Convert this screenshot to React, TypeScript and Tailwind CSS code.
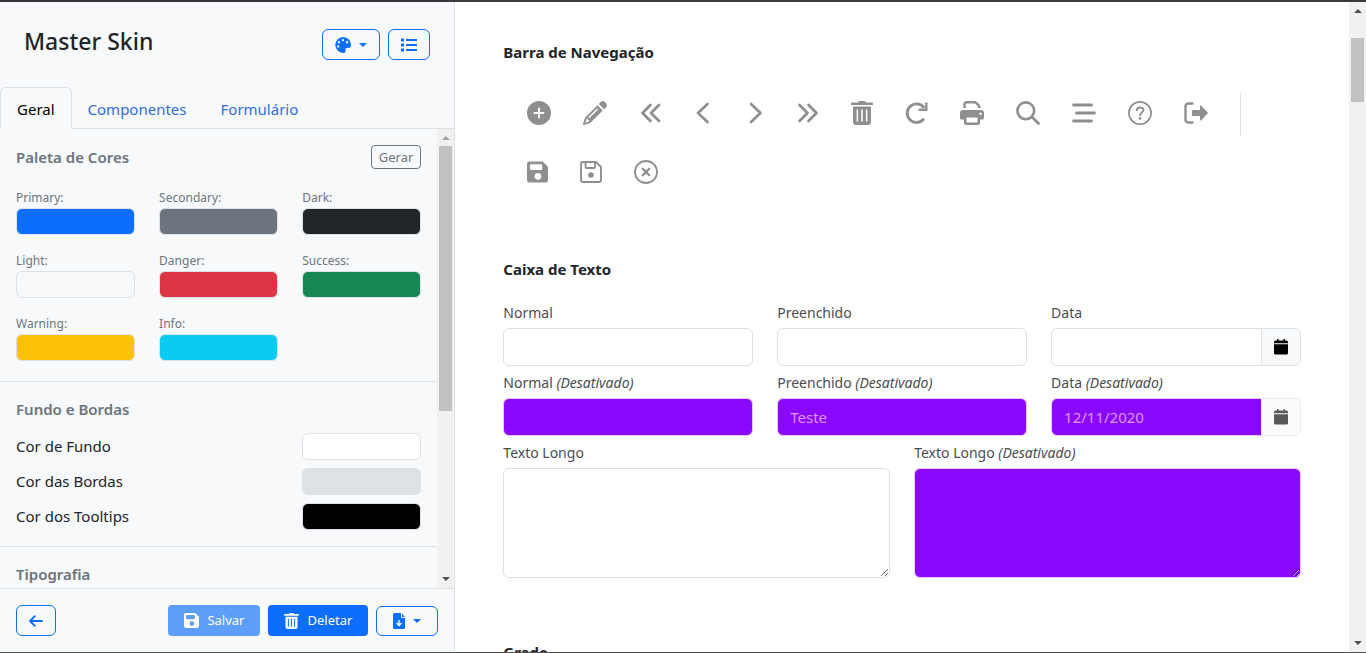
import React from "react";

const GERAL_COLORS = [
  { name: "Primary", swatch: "bg-[#0d6efd]" },
  { name: "Secondary", swatch: "bg-[#6c757d]" },
  { name: "Dark", swatch: "bg-[#212529]" },
  { name: "Light", swatch: "bg-[#f8f9fa]" },
  { name: "Danger", swatch: "bg-[#dc3545]" },
  { name: "Success", swatch: "bg-[#198754]" },
  { name: "Warning", swatch: "bg-[#ffc107]" },
  { name: "Info", swatch: "bg-[#0dcaf0]" },
];

const SURFACE_COLORS = [
  { name: "Cor de Fundo", swatch: "bg-white" },
  { name: "Cor das Bordas", swatch: "bg-[#dee2e6]" },
  { name: "Cor dos Tooltips", swatch: "bg-black" },
];

const line = {
  fill: "none",
  stroke: "currentColor",
  strokeLinecap: "round" as const,
  strokeLinejoin: "round" as const,
};

const trashPath =
  "M9 0h6l1 1.6h6.2a1 1 0 0 1 0 2.4H1.8a1 1 0 0 1 0-2.4H8zM3 5.6h18V21a3 3 0 0 1-3 3H6a3 3 0 0 1-3-3zM6.6 8.6v12h1.5v-12zM11.2 8.6v12h1.6v-12zM15.9 8.6v12h1.5v-12z";
const savePath =
  "M3 1h14.500L23 6.500V20a3 3 0 0 1-3 3H4a3 3 0 0 1-3-3V3.500A2.500 2.500 0 0 1 3 1zM5.500 4A1.500 1.500 0 0 0 4 5.500v3A1.500 1.500 0 0 0 5.500 10h10A1.500 1.500 0 0 0 17 8.500v-3A1.500 1.500 0 0 0 15.500 4zM12.500 13a3.500 3.500 0 1 0 0 7 3.500 3.500 0 0 0 0-7z";

const NAV_MAIN: { label: string; size: string; box: string; art: React.ReactNode }[] = [
  {
    label: "Adicionar",
    size: "w-6",
    box: "0 0 24 24",
    art: (
      <>
        <circle cx="12" cy="12" r="12" fill="currentColor" />
        <path d="M12 7.500v9M7.500 12h9" stroke="#fff" strokeWidth="2" strokeLinecap="round" />
      </>
    ),
  },
  {
    label: "Editar",
    size: "w-6",
    box: "0 0 24 24",
    art: (
      <>
        <path d="M17.500 1.200a3.200 3.200 0 0 1 4.500 0l.8.8a3.200 3.200 0 0 1 0 4.500l-1.800 1.700L15.800 3z" fill="currentColor" />
        <path
          fillRule="evenodd"
          d="M14.400 4.300l5.300 5.300L7.300 22 1 23.900a.8.8 0 0 1-1-1L2 16.700zM3.700 17.800l-1.300 3.900 3.900-1.300c0-1-.3-1.500-1.300-1.600 0-.6-.6-1-1.300-1zM14 7.400L5.200 16.200l1 1 8.900-8.800z"
          fill="currentColor"
        />
      </>
    ),
  },
  {
    label: "Primeiro",
    size: "w-[22px]",
    box: "0 0 22 24",
    art: <path {...line} strokeWidth="2.700" d="M11.500 4L3.500 12l8 8M20 4l-8 8 8 8" />,
  },
  {
    label: "Anterior",
    size: "w-5",
    box: "0 0 20 24",
    art: <path {...line} strokeWidth="2.700" d="M14.500 3L5 12l9.500 9" />,
  },
  {
    label: "Próximo",
    size: "w-5",
    box: "0 0 20 24",
    art: <path {...line} strokeWidth="2.700" d="M6 3l9.500 9L6 21" />,
  },
  {
    label: "Último",
    size: "w-[22px]",
    box: "0 0 22 24",
    art: <path {...line} strokeWidth="2.700" d="M2.500 4l8 8-8 8M11.500 4l8 8-8 8" />,
  },
  {
    label: "Excluir",
    size: "w-[22px]",
    box: "1 0 22 24",
    art: <path fill="currentColor" fillRule="evenodd" d={trashPath} />,
  },
  {
    label: "Atualizar",
    size: "w-[23px]",
    box: "0 0 23 24",
    art: (
      <>
        <path {...line} strokeWidth="2.800" d="M18.300 18.500A9.300 9.300 0 1 1 18.500 6" />
        <path {...line} strokeWidth="2.400" strokeLinecap="butt" strokeLinejoin="miter" d="M21.300 1.500v7.300h-7.600" />
      </>
    ),
  },
  {
    label: "Imprimir",
    size: "w-6",
    box: "0 0 24 24",
    art: (
      <>
        <path {...line} strokeWidth="2.400" strokeLinecap="butt" d="M4.500 7V3.200a2 2 0 0 1 2-2h8.700l4 3.600V7" />
        <path
          fill="currentColor"
          fillRule="evenodd"
          d="M3 9h18a3 3 0 0 1 3 3v5a1.500 1.500 0 0 1-1.500 1.500H20V22a2 2 0 0 1-2 2H6a2 2 0 0 1-2-2v-3.500H1.500A1.500 1.500 0 0 1 0 17v-5a3 3 0 0 1 3-3zM6.500 16.500v5h11v-5zM20.500 11.500a1.300 1.300 0 1 0 0 2.600 1.300 1.300 0 0 0 0-2.600z"
        />
      </>
    ),
  },
  {
    label: "Pesquisar",
    size: "w-6",
    box: "0 0 24 24",
    art: (
      <>
        <circle {...line} cx="9.800" cy="9.800" r="8.400" strokeWidth="2.600" />
        <path {...line} strokeWidth="2.800" d="M16 16l6.500 6.500" />
      </>
    ),
  },
  {
    label: "Menu",
    size: "w-6",
    box: "0 0 24 24",
    art: <path {...line} strokeWidth="2.800" d="M1.500 4h18M4.500 12h18M1.500 20h18" />,
  },
  {
    label: "Ajuda",
    size: "w-6",
    box: "0 0 24 24",
    art: (
      <>
        <circle {...line} cx="12" cy="12" r="11.100" strokeWidth="1.700" />
        <path {...line} strokeWidth="1.900" d="M8.800 9.200c.2-3.700 6.700-3.700 6.600 0 0 2.300-3.200 2.300-3.300 5" />
        <circle cx="12" cy="17.400" r="1.300" fill="currentColor" />
      </>
    ),
  },
  {
    label: "Sair",
    size: "w-6",
    box: "0 0 24 24",
    art: (
      <>
        <path {...line} strokeWidth="2.400" d="M8.500 2.500H4A2.500 2.500 0 0 0 1.500 5v14A2.500 2.500 0 0 0 4 21.500h4.500" />
        <path fill="currentColor" d="M9 9h7V5.200a.7.700 0 0 1 1.100-.6l6.500 6.800a.9.900 0 0 1 0 1.200l-6.500 6.800a.7.700 0 0 1-1.100-.6V15H9a1 1 0 0 1-1-1v-4a1 1 0 0 1 1-1z" />
      </>
    ),
  },
];

const NAV_EXTRA: typeof NAV_MAIN = [
  {
    label: "Salvar",
    size: "w-[21px]",
    box: "1 0 22 24",
    art: <path fill="currentColor" fillRule="evenodd" d={savePath} />,
  },
  {
    label: "Salvar rascunho",
    size: "w-[22px]",
    box: "0 0 22 24",
    art: (
      <>
        <path {...line} strokeWidth="1.900" d="M3 2h13l5 5v13a2 2 0 0 1-2 2H3a2 2 0 0 1-2-2V4a2 2 0 0 1 2-2z" />
        <path {...line} strokeWidth="1.800" d="M5.500 2.500V7a1 1 0 0 0 1 1H14a1 1 0 0 0 1-1V2.500" />
        <circle cx="11" cy="15" r="2.800" fill="currentColor" />
      </>
    ),
  },
  {
    label: "Cancelar",
    size: "w-6",
    box: "0 0 24 24",
    art: (
      <>
        <circle {...line} cx="12" cy="12" r="11" strokeWidth="1.800" />
        <path {...line} strokeWidth="2.200" d="M8.700 8.700l6.600 6.600M15.300 8.700l-6.600 6.600" />
      </>
    ),
  },
];

function NavGroup({ items, divider }: { items: typeof NAV_MAIN; divider?: boolean }) {
  return (
    <div className={divider ? "flex h-[43px] border-r border-[#dee2e6] pr-4" : "flex h-[43px]"}>
      {items.map((item) => (
        <button key={item.label} type="button" aria-label={item.label} className="flex items-center px-4 pb-1 text-[#8f8f8f]">
          <svg viewBox={item.box} className={`h-6 ${item.size}`}>
            {item.art}
          </svg>
        </button>
      ))}
    </div>
  );
}

function Caret() {
  return (
    <svg viewBox="0 0 8 4" className="h-1 w-2" fill="currentColor">
      <path d="M0 0h8L4 4z" />
    </svg>
  );
}

function ScrollTrack({ thumb, upClass }: { thumb: string; upClass: string }) {
  return (
    <div aria-hidden="true" className="flex w-[17px] shrink-0 flex-col items-center bg-[#f1f1f1] py-[7px]">
      <svg viewBox="0 0 8 4" className={`h-1 w-2 shrink-0 ${upClass}`} fill="currentColor">
        <path d="M4 0l4 4H0z" />
      </svg>
      <div className={`w-[13px] bg-[#c1c1c1] ${thumb}`} />
      <svg viewBox="0 0 8 4" className="mt-auto h-1 w-2 shrink-0 text-[#505050]" fill="currentColor">
        <path d="M0 0h8L4 4z" />
      </svg>
    </div>
  );
}

function CalendarIcon() {
  return (
    <svg viewBox="0 0 14 16" className="h-4 w-[14px]" fill="currentColor">
      <path d="M3 0h1.500v1.500h5V0H11v1.500h1.500A1.500 1.500 0 0 1 14 3v1.200H0V3a1.500 1.500 0 0 1 1.500-1.500H3zM0 5.200h14V14a1.500 1.500 0 0 1-1.500 1.500h-11A1.500 1.500 0 0 1 0 14z" />
    </svg>
  );
}

const outlineButton =
  "flex items-center justify-center rounded-md border border-[#0d6efd] text-[#0d6efd]";
const fieldLabel = "mb-[3px] block text-sm leading-6 text-[#4a4d50]";
const field =
  "block h-[38px] w-full min-w-0 border border-[#dee2e6] bg-white px-3 text-[15px] text-[#212529] disabled:border-[#e9c8ff] disabled:bg-[#8b08ff] disabled:text-[#dc94ff]";
const area =
  "block h-[110px] w-full resize-y rounded-md border border-[#dee2e6] bg-white px-3 py-2 disabled:border-[#e9c8ff] disabled:bg-[#8b08ff]";

function Off() {
  return <em>(Desativado)</em>;
}

function TextField({ id, label, off, value }: { id: string; label: string; off?: boolean; value?: string }) {
  return (
    <div>
      <label htmlFor={id} className={fieldLabel}>
        {label} {off && <Off />}
      </label>
      <input id={id} type="text" disabled={off} defaultValue={value} className={`${field} rounded-md`} />
    </div>
  );
}

function DateField({ id, label, off, value }: { id: string; label: string; off?: boolean; value?: string }) {
  return (
    <div>
      <label htmlFor={id} className={fieldLabel}>
        {label} {off && <Off />}
      </label>
      <div className="flex">
        <input id={id} type="text" disabled={off} defaultValue={value} className={`${field} rounded-l-md border-r-0`} />
        <button
          type="button"
          disabled={off}
          aria-label="Abrir calendário"
          className="flex w-10 shrink-0 items-center justify-center rounded-r-md border border-[#dee2e6] bg-[#f8f9fa] text-black disabled:opacity-65"
        >
          <CalendarIcon />
        </button>
      </div>
    </div>
  );
}

function Sidebar() {
  return (
    <aside className="flex w-1/3 shrink-0 flex-col border-r border-[#dee2e6] bg-[#f8f9fa]">
      <header className="flex items-start justify-between px-6 pt-[27px]">
        <h1 className="text-[23px] leading-6 font-medium">Master Skin</h1>
        <div className="flex gap-2">
          <button type="button" aria-label="Paleta" className={`${outlineButton} h-[31px] w-[58px] gap-2`}>
            <svg viewBox="0 0 16 16" className="size-4" fill="currentColor">
              <path
                fillRule="evenodd"
                d="M8 0a8 8 0 1 0 .6 16c1.600-.1 2.200-1 1.900-2.300-.4-1.700.4-2.900 2-2.900H14c1.300 0 2-.9 2-2.600C16 3.600 12.400 0 8 0zM8 1.900a1.200 1.200 0 1 1 0 2.400 1.200 1.200 0 0 1 0-2.400zM3.900 4a1.200 1.200 0 1 1 0 2.400 1.200 1.200 0 0 1 0-2.400zM12.100 4a1.200 1.200 0 1 1 0 2.400 1.200 1.200 0 0 1 0-2.400zM3.200 8.200a1.200 1.200 0 1 1 0 2.400 1.200 1.200 0 0 1 0-2.400z"
              />
            </svg>
            <Caret />
          </button>
          <button type="button" aria-label="Lista" className={`${outlineButton} h-[31px] w-[42px]`}>
            <svg viewBox="0 0 16 14" className="h-[14px] w-4" fill="currentColor">
              <path d="M0 .5h3v3H0zM5 1h11v2H5zM0 5.500h3v3H0zM5 6h11v2H5zM0 10.500h3v3H0zM5 11h11v2H5z" />
            </svg>
          </button>
        </div>
      </header>

      <nav className="mt-[27px] flex border-b border-[#dee2e6]">
        <a
          href="#geral"
          className="-mb-px rounded-t-md border border-b-0 border-[#dee2e6] bg-[#f8f9fa] px-4 pt-[9px] pb-2 leading-6 text-black"
        >
          Geral
        </a>
        <a href="#componentes" className="px-4 pt-[10px] leading-6 text-[#2f6ee0]">
          Componentes
        </a>
        <a href="#formulario" className="px-4 pt-[10px] pl-[18px] leading-6 text-[#2f6ee0]">
          Formulário
        </a>
      </nav>

      <div className="flex min-h-0 flex-1">
        <div className="min-w-0 flex-1 overflow-hidden">
          <section className="border-b border-[#dee2e6] px-4 pt-4 pb-5">
            <div className="flex h-6 items-center justify-between">
              <h2 className="leading-[22px] font-semibold text-[#6c757d]">Paleta de Cores</h2>
              <button
                type="button"
                className="rounded border border-[#6c757d] px-[7px] text-[13px] leading-[22px] text-[#6c757d]"
              >
                Gerar
              </button>
            </div>
            <div className="mt-[19px] grid grid-cols-3 gap-x-6 gap-y-4">
              {GERAL_COLORS.map((color) => (
                <div key={color.name}>
                  <div className="text-xs leading-5 text-[#6c757d]">{color.name}:</div>
                  <button
                    type="button"
                    aria-label={color.name}
                    className={`block h-[27px] w-full rounded-md border border-[#dee2e6] ${color.swatch}`}
                  />
                </div>
              ))}
            </div>
          </section>

          <section className="border-b border-[#dee2e6] p-4">
            <h2 className="leading-[22px] font-semibold text-[#6c757d]">Fundo e Bordas</h2>
            <div className="mt-[13px] flex flex-col gap-2">
              {SURFACE_COLORS.map((color) => (
                <div key={color.name} className="grid grid-cols-3 items-center gap-x-6">
                  <span className="col-span-2 leading-[27px]">{color.name}</span>
                  <button
                    type="button"
                    aria-label={color.name}
                    className={`block h-[27px] w-full rounded-md border border-[#dee2e6] ${color.swatch}`}
                  />
                </div>
              ))}
            </div>
          </section>

          <section className="p-4">
            <h2 className="leading-[22px] font-semibold text-[#6c757d]">Tipografia</h2>
          </section>
        </div>
        <ScrollTrack thumb="mt-[6px] h-[265px]" upClass="text-[#a3a3a3]" />
      </div>

      <footer className="flex items-end gap-2 border-t border-[#dee2e6] p-4">
        <button type="button" aria-label="Voltar" className={`${outlineButton} mr-auto h-[31px] w-10`}>
          <svg viewBox="0 0 14 12" className="h-3 w-[14px]">
            <path {...line} strokeWidth="1.900" d="M13 6H1.200M5.800 1.200L1 6l4.800 4.800" />
          </svg>
        </button>
        <button
          type="button"
          disabled
          className="flex h-[31px] items-center gap-2 rounded bg-[#0d6efd] px-4 text-[13px] text-white disabled:opacity-65"
        >
          <svg viewBox="1 1 22 22" className="size-[15px]" fill="currentColor">
            <path fillRule="evenodd" d={savePath} />
          </svg>
          Salvar
        </button>
        <button type="button" className="flex h-[31px] items-center gap-2 rounded bg-[#0d6efd] px-4 text-[13px] text-white">
          <svg viewBox="1 0 22 24" className="h-4 w-[15px]" fill="currentColor">
            <path fillRule="evenodd" d={trashPath} />
          </svg>
          Deletar
        </button>
        <button type="button" aria-label="Exportar" className={`${outlineButton} h-[30px] w-[62px] gap-2`}>
          <svg viewBox="0 0 12 16" className="h-4 w-3" fill="currentColor">
            <path
              fillRule="evenodd"
              d="M1.500 0H8v3.500A1.500 1.500 0 0 0 9.500 5H12v9.500a1.500 1.500 0 0 1-1.500 1.500h-9A1.500 1.500 0 0 1 0 14.500v-13A1.500 1.500 0 0 1 1.500 0zM9 .3L11.800 4H9.500a.5.500 0 0 1-.5-.5zM5.300 7v3.700L4 9.400l-1 1 3 3 3-3-1-1-1.300 1.300V7z"
            />
          </svg>
          <Caret />
        </button>
      </footer>
    </aside>
  );
}

export default function App() {
  return (
    <div className="flex h-screen flex-col border-t-2 border-b border-t-[#3a393e] border-b-[#55524f] bg-white font-['Noto_Sans','Open_Sans',sans-serif] text-[15px] text-[#212529]">
      <div className="flex min-h-0 flex-1">
        <Sidebar />
        <main className="flex min-w-0 flex-1">
          <div className="flex min-w-0 flex-1 flex-col gap-[62px] overflow-hidden px-12 pt-[38px]">
            <section>
              <h2 className="leading-6 font-bold">Barra de Navegação</h2>
              <div className="mt-[29px] flex flex-wrap gap-y-4 pl-2">
                <NavGroup items={NAV_MAIN} divider />
                <NavGroup items={NAV_EXTRA} />
              </div>
            </section>

            <section>
              <h2 className="mb-5 leading-6 font-bold">Caixa de Texto</h2>
              <div className="grid grid-cols-3 gap-x-6 gap-y-[5px]">
                <TextField id="normal" label="Normal" />
                <TextField id="preenchido" label="Preenchido" />
                <DateField id="data" label="Data" />
                <TextField id="normal-off" label="Normal" off />
                <TextField id="preenchido-off" label="Preenchido" off value="Teste" />
                <DateField id="data-off" label="Data" off value="12/11/2020" />
              </div>
              <div className="mt-[5px] grid grid-cols-2 gap-x-6">
                <div>
                  <label htmlFor="longo" className={fieldLabel}>
                    Texto Longo
                  </label>
                  <textarea id="longo" className={area} />
                </div>
                <div>
                  <label htmlFor="longo-off" className={fieldLabel}>
                    Texto Longo <Off />
                  </label>
                  <textarea id="longo-off" disabled className={area} />
                </div>
              </div>
            </section>

            <section>
              <h2 className="leading-6 font-bold">Grade</h2>
            </section>
          </div>
          <ScrollTrack thumb="mt-[25px] h-16" upClass="text-[#505050]" />
        </main>
      </div>
    </div>
  );
}
